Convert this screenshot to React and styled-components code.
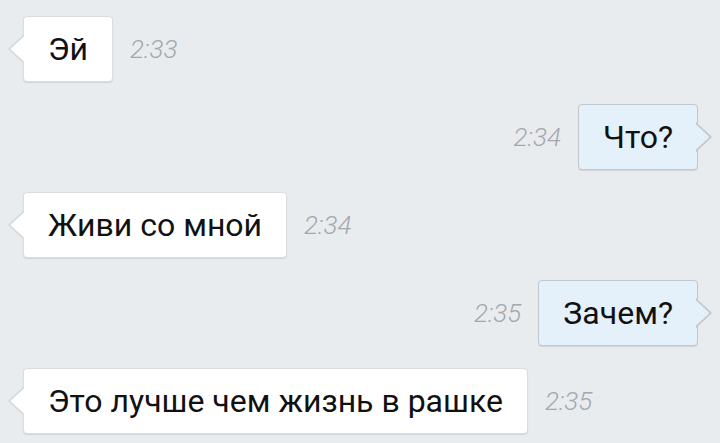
import React from "react";
import styled, { createGlobalStyle, css } from "styled-components";

const GlobalStyle = createGlobalStyle`
  html, body {
    margin: 0;
    padding: 0;
    background: #e9ecef;
  }
  body {
    font-family: Roboto, "Noto Sans", "Liberation Sans", sans-serif;
  }
`;

const StyledChat = styled.div`
  width: 720px;
  height: 443px;
  overflow: hidden;
  box-sizing: border-box;
  padding: 16px 22px 0 23px;
  display: flex;
  flex-direction: column;
  gap: 22px;
  background: #e9ecef;
`;

const StyledRow = styled.div`
  display: flex;
  align-items: center;
  gap: 17px;
  justify-content: ${(p) => (p.$out ? "flex-end" : "flex-start")};
`;

const StyledBubble = styled.div`
  position: relative;
  box-sizing: border-box;
  height: 66px;
  padding: 0 24px;
  display: flex;
  align-items: center;
  border-radius: 4px;
  font-size: 32px;
  color: #111;
  background: ${(p) => (p.$out ? "#e4f0fa" : "#ffffff")};
  border: 1px solid ${(p) => (p.$out ? "#c3c8cd" : "#d9dce0")};
  box-shadow: 0 1px 1px rgba(0, 0, 0, 0.1);

  &::before,
  &::after {
    content: "";
    position: absolute;
    top: 50%;
    width: 16px;
    height: 30px;
    margin-top: -15px;
  }

  ${(p) =>
    p.$out
      ? css`
          &::before {
            right: -15px;
            background: #c3c8cd;
            clip-path: polygon(0 0, 100% 50%, 0 100%);
          }
          &::after {
            right: -14px;
            background: #e4f0fa;
            clip-path: polygon(0 1.5px, calc(100% - 1.5px) 50%, 0 calc(100% - 1.5px));
          }
        `
      : css`
          &::before {
            left: -16px;
            background: #d6d9dd;
            clip-path: polygon(100% 0, 0 50%, 100% 100%);
          }
          &::after {
            left: -15px;
            background: #ffffff;
            clip-path: polygon(100% 1.5px, 1.5px 50%, 100% calc(100% - 1.5px));
          }
        `}
`;

const StyledTime = styled.span`
  font-size: 26px;
  font-style: italic;
  font-weight: 300;
  color: #a4a8ac;
`;

const messages = [
  { text: "Эй", time: "2:33", out: false },
  { text: "Что?", time: "2:34", out: true },
  { text: "Живи со мной", time: "2:34", out: false },
  { text: "Зачем?", time: "2:35", out: true },
  { text: "Это лучше чем жизнь в рашке", time: "2:35", out: false },
];

const App = () => {
  return (
    <>
      <GlobalStyle />
      <StyledChat>
        {messages.map((m, i) => (
          <StyledRow key={i} $out={m.out}>
            {m.out && <StyledTime>{m.time}</StyledTime>}
            <StyledBubble $out={m.out}>{m.text}</StyledBubble>
            {!m.out && <StyledTime>{m.time}</StyledTime>}
          </StyledRow>
        ))}
      </StyledChat>
    </>
  );
};

export default App;
